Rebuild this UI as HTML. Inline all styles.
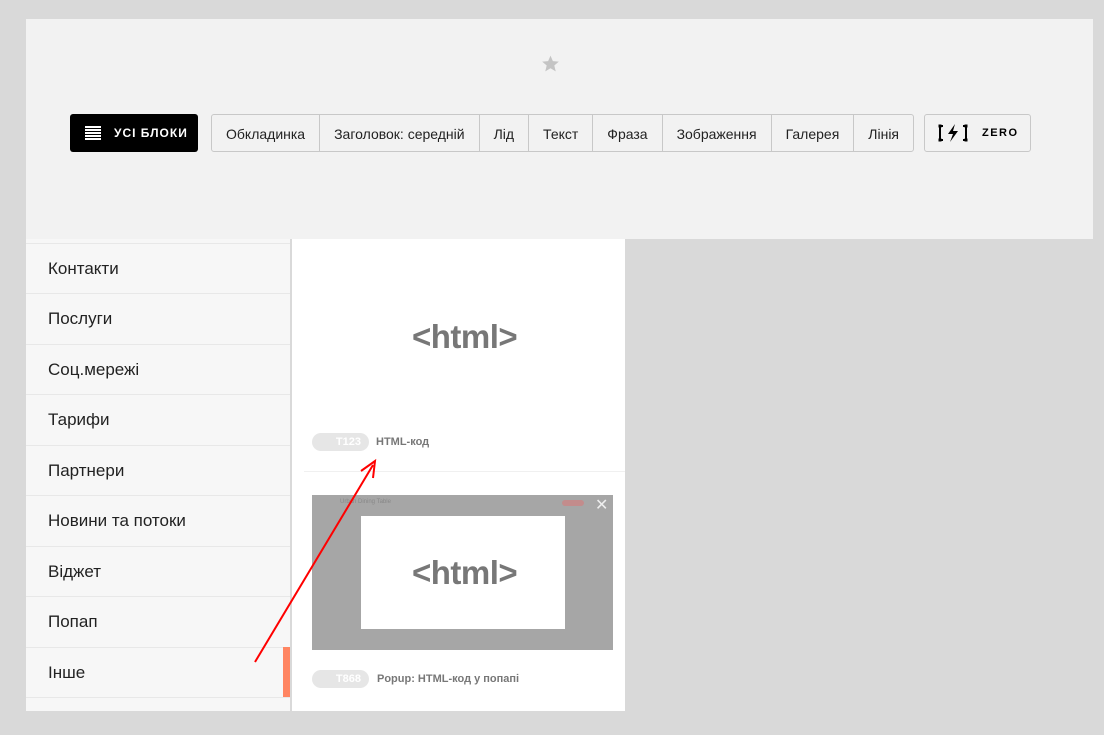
<!DOCTYPE html>
<html><head><meta charset="utf-8"><style>
*{margin:0;padding:0;box-sizing:border-box}
body{width:1104px;height:735px;background:#d9d9d9;position:relative;overflow:hidden;font-family:"Liberation Sans",sans-serif}
.top{position:absolute;left:26px;top:19px;width:1067px;height:220px;background:#f2f2f2}
.star{position:absolute;left:541px;top:54px;width:19px;height:19px}
.all{position:absolute;left:70px;top:114px;width:128px;height:38px;background:#000;border-radius:3px;color:#fff;font-weight:bold;font-size:12px;letter-spacing:1px;line-height:38px;padding-left:44px}
.all i{position:absolute;left:15px;top:12px;width:16px;height:14px;background:repeating-linear-gradient(#fff 0 2px,transparent 2px 3px)}
.tabs{position:absolute;left:211px;top:114px;height:38px;border:1px solid #c8c8c8;border-radius:3px;display:flex}
.tabs div{height:36px;line-height:38px;font-size:14px;color:#222;padding:0 14px;border-left:1px solid #c8c8c8}
.tabs div:first-child{border-left:none}
.zero{position:absolute;left:924px;top:114px;width:107px;height:38px;border:1px solid #c8c8c8;border-radius:3px;font-size:11px;font-weight:bold;letter-spacing:1.5px;line-height:36px;padding-left:57px;color:#000}
.zero svg{position:absolute;left:12px;top:8px}
.side{position:absolute;left:26px;top:239px;width:264px;height:472px;background:#f7f7f7}
.side div{position:absolute;left:0;width:264px;border-top:1px solid #e8e8e8;color:#222;padding-left:22px;line-height:50px;font-family:"Liberation Sans",sans-serif;font-size:17px}
.orange{position:absolute;left:283px;top:647px;width:7px;height:50px;background:#ff8562}
.main{position:absolute;left:292px;top:239px;width:333px;height:472px;background:#fff}
.html{position:absolute;color:#777;font-weight:bold;font-size:33px;font-family:"Liberation Sans",sans-serif;letter-spacing:-.5px}
.pill{position:absolute;width:57px;height:18px;border-radius:9px;background:#e6e6e6;color:#fff;font-size:11px;font-weight:bold;text-align:right;padding-right:8px;line-height:18px}
.lbl{position:absolute;font-size:11px;font-weight:bold;color:#777}
</style></head><body>
<div class="top"></div>
<svg class="star" viewBox="0 0 24 24"><path d="M12 2l3 7 7.5.6-5.7 5 1.8 7.4L12 18l-6.6 4 1.8-7.4-5.7-5L9 9z" fill="#c4c4c4"/></svg>
<div class="all"><i></i>УСІ БЛОКИ</div>
<div class="tabs"><div>Обкладинка</div><div>Заголовок: середній</div><div>Лід</div><div>Текст</div><div>Фраза</div><div>Зображення</div><div>Галерея</div><div>Лінія</div></div>
<div class="zero"><svg width="32" height="20" viewBox="0 0 32 20"><path d="M6 3H3V17H6M26 3H29V17H26" stroke="#000" stroke-width="2" fill="none"/><rect x="1.5" y="1.5" width="3" height="3" fill="#000"/><rect x="1.5" y="15.5" width="3" height="3" fill="#000"/><rect x="27.5" y="1.5" width="3" height="3" fill="#000"/><rect x="27.5" y="15.5" width="3" height="3" fill="#000"/><path d="M18 1L11 11H16L13 19L21 8H16Z" fill="#000"/></svg>ZERO</div>
<div class="side">
<div style="top:4px">Контакти</div><div style="top:54px">Послуги</div><div style="top:105px">Соц.мережі</div><div style="top:155px">Тарифи</div><div style="top:206px">Партнери</div><div style="top:256px">Новини та потоки</div><div style="top:307px">Віджет</div><div style="top:357px">Попап</div><div style="top:408px">Інше</div><div style="top:458px;line-height:12px">&nbsp;</div>
</div>
<div class="orange"></div>
<div class="main">
<div class="html" style="left:120px;top:79px">&lt;html&gt;</div>
<div class="pill" style="left:20px;top:194px">T123</div>
<div class="lbl" style="left:84px;top:197px">HTML-код</div>
<div style="position:absolute;left:12px;top:232px;width:321px;height:1px;background:#f0f0f0"></div>
<div style="position:absolute;left:20px;top:256px;width:301px;height:155px;background:#a6a6a6">
<div style="position:absolute;left:28px;top:4px;font-size:6px;color:#888">Urban Dining Table</div>
<div style="position:absolute;left:250px;top:5px;width:22px;height:6px;border-radius:3px;background:#c38c8c"></div>
<div style="position:absolute;left:283px;top:0px;color:#eee;font-size:16px">✕</div>
<div style="position:absolute;left:49px;top:21px;width:204px;height:113px;background:#fff"></div>
<div class="html" style="left:100px;top:59px">&lt;html&gt;</div>
</div>
<div class="pill" style="left:20px;top:431px">T868</div>
<div class="lbl" style="left:85px;top:434px">Popup: HTML-код у попапі</div>
</div>
<svg style="position:absolute;left:0;top:0" width="1104" height="735"><path d="M255 662L373 465M361 471L375 461L373 478" stroke="#f00" stroke-width="2" fill="none"/></svg>
</body></html>
